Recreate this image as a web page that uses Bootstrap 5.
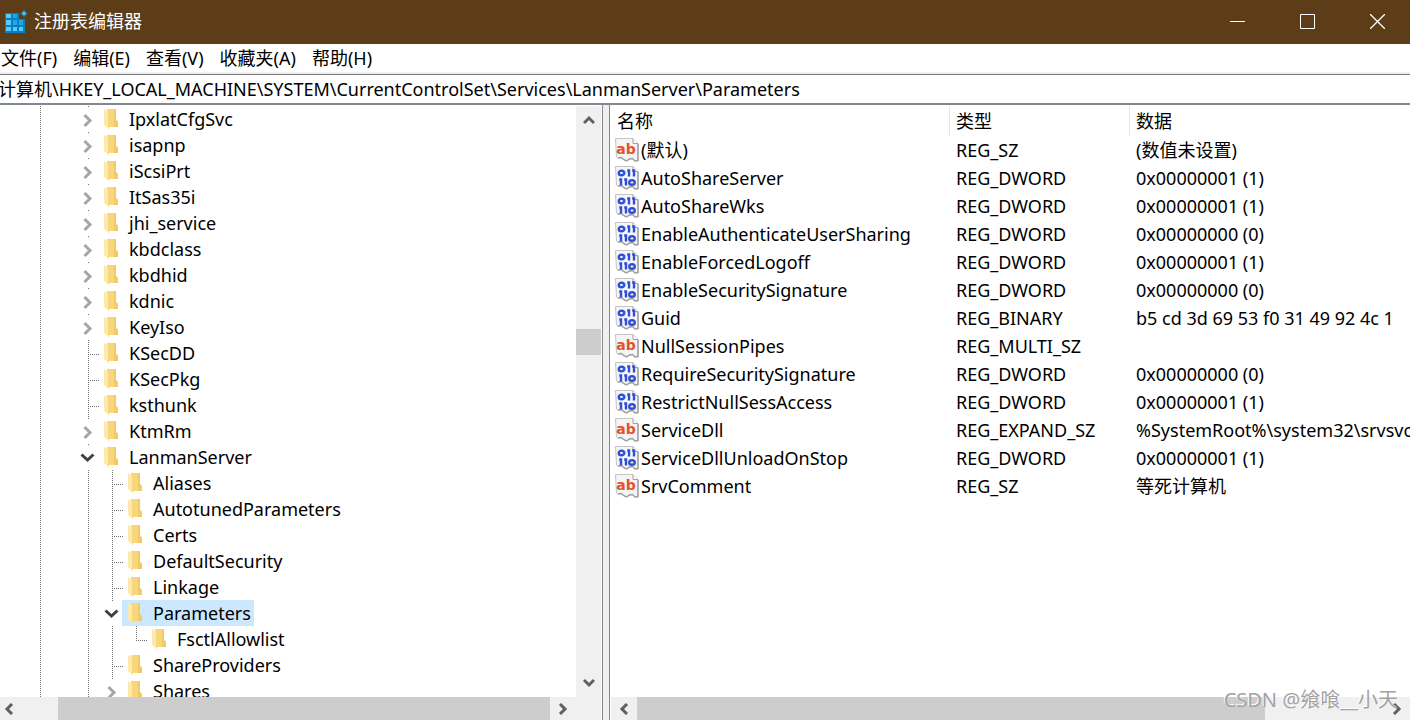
<!DOCTYPE html>
<html lang="zh-CN">
<head>
<meta charset="utf-8">
<meta name="viewport" content="width=device-width, initial-scale=1">
<title>注册表编辑器</title>
<link href="https://cdn.jsdelivr.net/npm/bootstrap@5.3.0/dist/css/bootstrap.min.css" rel="stylesheet">
<style>
  body { font-family: "Noto Sans", "Noto Sans CJK SC", sans-serif; font-size: 18px; line-height: 26px; color: #000; background: #fff; }
  button { border: 0; background: none; padding: 0; color: inherit; }
  .titlebar { height: 44px; background: #5d3d17; color: #fff; padding-left: 4px; }
  .titlebar h1 { font-size: 18px; line-height: 26px; font-weight: 400; margin: 0 0 0 6px; padding-bottom: 2px; }
  .win-btn { width: 70px; height: 42px; padding-bottom: 2px; }
  .win-btn svg { display: block; margin: auto; }
  .win-btns { margin-right: -2px; }
  .menus { height: 30px; gap: 16px; padding-left: 1px; border-bottom: 2px solid #f0f0f0; }
  .address { height: 31px; border: 0; border-top: 1px solid #7a7a7a; border-bottom: 2px solid #828790; padding: 0 0 2px; text-indent: -2px; width: 100%; outline: 0; color: #000; }
  .pane-left { width: 603px; border-right: 1px solid #828790; padding: 1px 1px 0 0; }
  .splitter { width: 7px; background: #f0f0f0; border-right: 1px solid #828790; }
  .pane-right { padding: 1px 0 0 1px; }

  .tree { --dot: #6e6e6e; white-space: nowrap; }
  .tree-row { height: 26px; padding-left: 26px; }
  .guide { width: 24px; height: 26px; flex: none; position: relative; }
  .line::before, .half::before, .twig::before { content: ""; position: absolute; left: 14px; top: 0; width: 1px; height: 100%; background: repeating-linear-gradient(var(--dot) 0 1px, transparent 1px 2px); }
  .half::before { height: 14px; }
  .twig::after, .half::after { content: ""; position: absolute; left: 14px; top: 14px; width: 12px; height: 1px; background: repeating-linear-gradient(90deg, var(--dot) 0 1px, transparent 1px 2px); }
  .stub { background: linear-gradient(var(--dot), var(--dot)) 14px 0 / 1px 1px no-repeat; }
  .guide button { display: block; width: 24px; height: 26px; }
  .guide svg { display: block; }
  .node { height: 26px; padding: 0 3px 0 6px; gap: 11px; }
  .node.chosen { background: #cce8ff; }
  .node svg { flex: none; }

  .bar-bg, .corner { background: #f0f0f0; }
  .hbar { height: 23px; }
  .vbar { width: 25px; }
  .vbar button { height: 28px; }
  .hbar button { width: 26px; }
  .hbar .near { width: 18px; }
  .thumb { background: #cdcdcd; }
  .bar-bg svg { display: block; margin: auto; }

  .values { table-layout: fixed; width: 100%; border-collapse: separate; border-spacing: 0; white-space: nowrap; }
  .values th { font-weight: 400; height: 30px; padding: 0 0 0 6px; border-right: 1px solid #e5e5e5; }
  .values th:last-child { border-right: 0; }
  .values td { height: 28px; padding: 0 0 0 6px; overflow: hidden; }
  .values td:first-child { padding-left: 4px; }
  .col-name { width: 339px; }
  .col-type { width: 180px; }
  .entry { gap: 2px; }
  .entry svg { flex: none; }
  .watermark { right: 12px; bottom: 6px; font-size: 20px; line-height: 28px; color: #a3a3a3; text-shadow: -1px -1px 0 #fff; pointer-events: none; }
</style>
</head>
<body class="vh-100 d-flex flex-column overflow-hidden position-relative">

<svg class="d-none">
  <symbol id="folder" viewBox="0 0 14 20">
    <path d="M3 0h9v11l2 2v5H3z" fill="#f7d67c"/>
    <path d="M10 0h2v11l2 2v5h-4z" fill="#f2cb66"/>
    <path d="M0 0l5 3v17l-5-4z" fill="#ffe9a8"/>
    <path d="M4 2.500l1 .5v17l-1-1z" fill="#f5d885"/>
  </symbol>
  <symbol id="closed" viewBox="0 0 24 26"><path d="M10.500 9l5.500 5.500-5.500 5.500" fill="none" stroke="#a6a6a6" stroke-width="3"/></symbol>
  <symbol id="opened" viewBox="0 0 24 26"><path d="M7.500 10.500l6 5.500 6-5.500" fill="none" stroke="#404040" stroke-width="3"/></symbol>
  <symbol id="arrow" viewBox="0 0 12 12"><path d="M1 9l5-5 5 5" fill="none" stroke="#606060" stroke-width="3"/></symbol>
  <symbol id="sheet" viewBox="0 0 24 24">
    <path d="M.5.500h17.500l5 5V22.500l-3 .5-2.500-2.500-3 .5-3 2-3-1.500-2-2-3.500.5-1.500-1z" fill="#f5f5f5" stroke="#c4c4c4"/>
    <path d="M18 .5v5h5" fill="#fff" stroke="#a0a0a0"/>
    <path d="M23 6v16.500l-3 .5-2.500-2.500-3 .5-3 2-3-1.500-2-2-3.500.5" fill="none" stroke="#a0a0a0" stroke-width="1.500"/>
  </symbol>
  <symbol id="string" viewBox="0 0 24 24">
    <use href="#sheet"/>
    <text x="11" y="16" text-anchor="middle" font-family="DejaVu Sans, sans-serif" font-weight="700" font-size="14" fill="#e0522d">ab</text>
  </symbol>
  <symbol id="binary" viewBox="0 0 24 24">
    <use href="#sheet"/>
    <g fill="none" stroke="#2f4fd8" stroke-width="2.400">
      <ellipse cx="6.500" cy="7" rx="2.800" ry="2.300"/>
      <path d="M12.200 4.500H14V10.500M17.200 4.500H19V10.500M4.200 13.500H6V19.500M9.200 13.500H11V19.500"/>
      <ellipse cx="17" cy="16.500" rx="2.800" ry="2.300"/>
    </g>
  </symbol>
</svg>

<header class="titlebar d-flex align-items-center flex-shrink-0 overflow-hidden">
  <svg width="24" height="24" viewBox="0 0 24 24">
    <path d="M1 3h14v6h6v14H1z" fill="#0b7fc0"/>
    <g fill="#56cbf8">
      <path d="M2 4h5v4H2zM2 10h5v5H2zM2 17h5v4H2z"/>
      <path d="M9 17h4v4H9zM15 17h4v4h-4z"/>
    </g>
    <g fill="#1aa9ea"><path d="M9 4h4v4H9zM9 10h4v5H9zM15 10h4v5h-4z"/></g>
    <path d="M20 0l3.500 3.500L20 7l-3.500-3.500z" fill="#1585bd"/>
    <path d="M20 1.500l2 2-2 2-2-2z" fill="#5cc8f2"/>
  </svg>
  <h1>注册表编辑器</h1>
  <div class="win-btns ms-auto d-flex">
    <button class="win-btn" aria-label="最小化"><svg width="15" height="15" viewBox="0 0 15 15"><path d="M0 7.500h15" stroke="#fff"/></svg></button>
    <button class="win-btn" aria-label="最大化"><svg width="15" height="15" viewBox="0 0 15 15"><path d="M.5.500h14v14H.5z" fill="none" stroke="#fff"/></svg></button>
    <button class="win-btn" aria-label="关闭"><svg width="15" height="15" viewBox="0 0 15 15"><path d="M0 0l15 15M15 0L0 15" stroke="#fff" stroke-width="1.300"/></svg></button>
  </div>
</header>

<nav class="menus d-flex align-items-center flex-shrink-0">
  <button>文件(F)</button><button>编辑(E)</button><button>查看(V)</button><button>收藏夹(A)</button><button>帮助(H)</button>
</nav>
<input class="address flex-shrink-0" type="text" aria-label="地址" value="计算机\HKEY_LOCAL_MACHINE\SYSTEM\CurrentControlSet\Services\LanmanServer\Parameters">

<main class="d-flex flex-grow-1 overflow-hidden">
  <section class="pane-left d-flex flex-shrink-0">
    <div class="d-flex flex-column flex-grow-1 overflow-hidden">
      <div class="tree flex-grow-1 overflow-hidden" id="tree" role="tree"></div>
      <div class="hbar bar-bg d-flex flex-shrink-0">
        <button class="near" aria-label="向左"><svg width="12" height="12"><use href="#arrow" transform="rotate(-90 6 6)"/></svg></button>
        <div class="flex-grow-1 d-flex justify-content-end"><div class="thumb" style="width:92.5%"></div></div>
        <button aria-label="向右"><svg width="12" height="12"><use href="#arrow" transform="rotate(90 6 6)"/></svg></button>
      </div>
    </div>
    <div class="d-flex flex-column">
      <div class="vbar bar-bg d-flex flex-column flex-grow-1">
        <button aria-label="向上"><svg width="12" height="12"><use href="#arrow"/></svg></button>
        <div class="flex-grow-1 d-flex flex-column"><div style="height:36.4%"></div><div class="thumb" style="height:4.9%"></div></div>
        <button aria-label="向下"><svg width="12" height="12"><use href="#arrow" transform="rotate(180 6 6)"/></svg></button>
      </div>
      <div class="hbar corner"></div>
    </div>
  </section>
  <div class="splitter flex-shrink-0"></div>
  <section class="pane-right d-flex flex-column flex-grow-1 overflow-hidden">
    <div class="flex-grow-1 overflow-hidden">
      <table class="values">
        <thead><tr><th class="col-name">名称</th><th class="col-type">类型</th><th>数据</th></tr></thead>
        <tbody id="values"></tbody>
      </table>
    </div>
    <div class="hbar bar-bg d-flex flex-shrink-0">
      <button aria-label="向左"><svg width="12" height="12"><use href="#arrow" transform="rotate(-90 6 6)"/></svg></button>
      <div class="flex-grow-1 d-flex"><div class="thumb" style="width:84.1%"></div></div>
      <button aria-label="向右"><svg width="12" height="12"><use href="#arrow" transform="rotate(90 6 6)"/></svg></button>
    </div>
  </section>
</main>
<div class="watermark position-absolute">CSDN @飨喰__小天</div>

<script>
  // Guide codes: | line, . blank, + branch, L last branch, > closed key, v open key
  const kinds = { '|': 'line', '.': '', '+': 'twig', 'L': 'half', '>': 'stub', 'v': 'stub' };
  const keys = [
    ['|.>', 'IpxlatCfgSvc'], ['|.>', 'isapnp'], ['|.>', 'iScsiPrt'], ['|.>', 'ItSas35i'], ['|.>', 'jhi_service'],
    ['|.>', 'kbdclass'], ['|.>', 'kbdhid'], ['|.>', 'kdnic'], ['|.>', 'KeyIso'], ['|.+', 'KSecDD'],
    ['|.+', 'KSecPkg'], ['|.+', 'ksthunk'], ['|.>', 'KtmRm'], ['|.v', 'LanmanServer'], ['|.|+', 'Aliases'],
    ['|.|+', 'AutotunedParameters'], ['|.|+', 'Certs'], ['|.|+', 'DefaultSecurity'], ['|.|+', 'Linkage'],
    ['|.|v', 'Parameters'], ['|.||L', 'FsctlAllowlist'], ['|.|+', 'ShareProviders'], ['|.|>', 'Shares']
  ];
  const toggle = c => c === '>' || c === 'v'
    ? `<button aria-label="${c === '>' ? '展开' : '折叠'}"><svg width="24" height="26"><use href="#${c === '>' ? 'closed' : 'opened'}"/></svg></button>` : '';
  document.getElementById('tree').innerHTML = keys.map(([guides, name]) =>
    `<div class="tree-row d-flex" role="treeitem">${[...guides].map(c => `<span class="guide ${kinds[c]}">${toggle(c)}</span>`).join('')}` +
    `<span class="node d-flex align-items-center${name === 'Parameters' ? ' chosen' : ''}"><svg width="14" height="20"><use href="#folder"/></svg>${name}</span></div>`
  ).join('');

  const D = 'REG_DWORD', one = '0x00000001 (1)', zero = '0x00000000 (0)';
  const values = [
    ['(默认)', 'REG_SZ', '(数值未设置)'], ['AutoShareServer', D, one], ['AutoShareWks', D, one],
    ['EnableAuthenticateUserSharing', D, zero], ['EnableForcedLogoff', D, one], ['EnableSecuritySignature', D, zero],
    ['Guid', 'REG_BINARY', 'b5 cd 3d 69 53 f0 31 49 92 4c 1'], ['NullSessionPipes', 'REG_MULTI_SZ', ''],
    ['RequireSecuritySignature', D, zero], ['RestrictNullSessAccess', D, one],
    ['ServiceDll', 'REG_EXPAND_SZ', '%SystemRoot%\\system32\\srvsvc'], ['ServiceDllUnloadOnStop', D, one],
    ['SrvComment', 'REG_SZ', '等死计算机']
  ];
  document.getElementById('values').innerHTML = values.map(([name, type, data]) =>
    `<tr><td><span class="entry d-flex align-items-center"><svg width="24" height="24"><use href="#${type.endsWith('SZ') ? 'string' : 'binary'}"/></svg>${name}</span></td><td>${type}</td><td>${data}</td></tr>`
  ).join('');
</script>
<script src="https://cdn.jsdelivr.net/npm/bootstrap@5.3.0/dist/js/bootstrap.bundle.min.js"></script>
</body>
</html>
